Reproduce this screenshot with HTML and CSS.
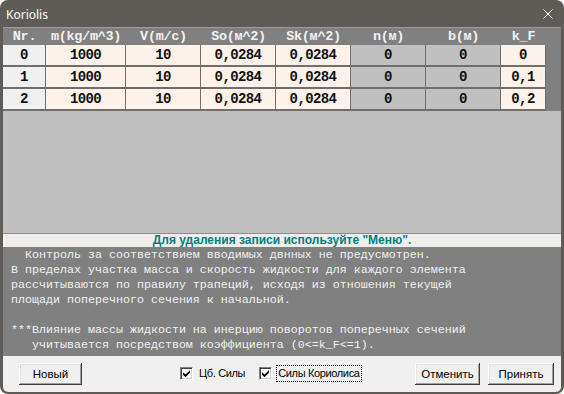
FILE: index.html
```html
<!DOCTYPE html>
<html lang="ru">
<head>
<meta charset="utf-8">
<title>Koriolis</title>
<link rel="stylesheet" href="styles.css">
</head>
<body>
<div class="window">
  <div class="titlebar">
    <span class="title">Koriolis</span>
    <svg class="close" width="10" height="10" viewBox="0 0 10 10"><path d="M0.5 0.5 L9.5 9.5 M9.5 0.5 L0.5 9.5" stroke="#ffffff" stroke-width="1" fill="none"/></svg>
  </div>
  <div class="client">
    <div class="grid-area">
      <div class="grid">
        <div class="hd">Nr.</div>
        <div class="hd">m(kg/m^3)</div>
        <div class="hd">V(m/c)</div>
        <div class="hd">So(м^2)</div>
        <div class="hd">Sk(м^2)</div>
        <div class="hd">n(м)</div>
        <div class="hd">b(м)</div>
        <div class="hd">k_F</div>
        <div class="hd"></div>

        <div class="c nr">0</div>
        <div class="c in">1000</div>
        <div class="c in">10</div>
        <div class="c in">0,0284</div>
        <div class="c in">0,0284</div>
        <div class="c ro">0</div>
        <div class="c ro">0</div>
        <div class="c in">0</div>
        <div class="c sp"></div>

        <div class="c nr">1</div>
        <div class="c in">1000</div>
        <div class="c in">10</div>
        <div class="c in">0,0284</div>
        <div class="c in">0,0284</div>
        <div class="c ro">0</div>
        <div class="c ro">0</div>
        <div class="c in">0,1</div>
        <div class="c sp"></div>

        <div class="c nr">2</div>
        <div class="c in">1000</div>
        <div class="c in">10</div>
        <div class="c in">0,0284</div>
        <div class="c in">0,0284</div>
        <div class="c ro">0</div>
        <div class="c ro">0</div>
        <div class="c in">0,2</div>
        <div class="c sp"></div>
      </div>
    </div>
    <div class="msg">Для удаления записи используйте "Меню".</div>
<pre class="notes">  Контроль за соответствием вводимых двнных не предусмотрен.
В пределах участка масса и скорость жидкости для каждого элемента
рассчитываются по правилу трапеций, исходя из отношения текущей
площади поперечного сечения к начальной.

***Влияние массы жидкости на инерцию поворотов поперечных сечений
   учитывается посредством коэффициента (0&lt;=k_F&lt;=1).</pre>
    <div class="bottom">
      <button class="btn btn-new">Новый</button>
      <label class="check check-first">
        <span class="box"><svg width="7" height="7" viewBox="0 0 7 7"><polygon points="0,2.2 2.5,4.6 7,0.2 7,2.8 2.5,7.2 0,4.8" fill="#000"/></svg></span>
        <span class="lbl">Цб. Силы</span>
      </label>
      <label class="check check-second">
        <span class="box"><svg width="7" height="7" viewBox="0 0 7 7"><polygon points="0,2.2 2.5,4.6 7,0.2 7,2.8 2.5,7.2 0,4.8" fill="#000"/></svg></span>
        <span class="lbl focus">Силы Кориолиса</span>
      </label>
      <button class="btn btn-cancel">Отменить</button>
      <button class="btn btn-ok">Принять</button>
    </div>
  </div>
</div>
</body>
</html>
```
FILE: styles.css
```css
html, body {
  margin: 0;
  padding: 0;
  background: #ffffff;
}

.window {
  width: 564px;
  height: 394px;
  box-sizing: border-box;
  background: #5f5b57;
  border-radius: 8px;
  display: flex;
  flex-direction: column;
  overflow: hidden;
}

.titlebar {
  height: 27px;
  flex: none;
  display: flex;
  align-items: center;
  justify-content: space-between;
  padding: 1px 11px 0 6px;
  box-sizing: border-box;
  color: #ffffff;
  font-family: "Noto Sans", "Liberation Sans", sans-serif;
  font-size: 12px;
}

.close {
  display: block;
}

.client {
  flex: 1;
  margin: 0 3px 2px 3px;
  background: #f0f0f0;
  display: flex;
  flex-direction: column;
  border-radius: 0 0 5px 5px;
  overflow: hidden;
}

.grid-area {
  height: 206px;
  flex: none;
  box-sizing: border-box;
  background: #c0c0c0;
  border-top: 1px solid #9c9c9c;
}

.grid {
  display: grid;
  grid-template-columns: 43px 80px 75px 75px 75px 75px 75px 45px 1fr;
  grid-template-rows: 17px 22px 22px 22px;
  font-family: "Liberation Mono", "Courier New", monospace;
  font-weight: bold;
  font-size: 14px;
  letter-spacing: -0.6px;
}

.hd {
  background: #808080;
  color: #f2f2f2;
  display: flex;
  align-items: center;
  justify-content: center;
  font-size: 13.5px;
  letter-spacing: -0.3px;
}

.c {
  display: flex;
  align-items: center;
  justify-content: center;
  box-sizing: border-box;
  border-right: 1px solid #6e6e6e;
  border-bottom: 2px solid #6e6e6e;
  color: #111111;
}

.nr {
  background: #f0f0f0;
}

.in {
  background: #fcf2e9;
}

.ro {
  background: #c0c0c0;
}

.sp {
  background: #808080;
  border-right: none;
  border-bottom-color: #808080;
}

.msg {
  height: 14px;
  flex: none;
  box-sizing: border-box;
  border-top: 1px solid #8c8c8c;
  background: #f0eeeb;
  color: #007f7f;
  font-family: "Liberation Sans", Arial, sans-serif;
  font-weight: bold;
  font-size: 12px;
  line-height: 13px;
  text-align: center;
}

.notes {
  height: 109px;
  flex: none;
  box-sizing: border-box;
  margin: 0;
  padding: 1px 0 0 8px;
  background: #808080;
  color: #f0f0f0;
  font-family: "Liberation Mono", "Courier New", monospace;
  font-size: 11.67px;
  line-height: 15px;
  white-space: pre;
  overflow: hidden;
}

.bottom {
  flex: 1;
  display: flex;
  align-items: flex-start;
  padding: 7px 7px 0 16px;
  font-family: "Liberation Sans", Arial, sans-serif;
  font-size: 11.5px;
  color: #000000;
}

.btn {
  height: 22px;
  box-sizing: border-box;
  padding: 0;
  border: none;
  background: #f0f0f0;
  font: inherit;
  color: #000000;
  box-shadow: inset -1px -1px #404040, inset 1px 1px #ffffff, inset -2px -2px #a0a0a0, inset 2px 2px #e3e3e3;
}

.btn-new {
  width: 63px;
}

.btn-cancel {
  width: 65px;
  margin-left: auto;
}

.btn-ok {
  width: 66px;
  margin-left: 8px;
}

.check {
  display: flex;
  align-items: center;
  height: 17px;
  margin-top: 2px;
  font-size: 11px;
  letter-spacing: -0.35px;
}

.check-first {
  margin-left: 98px;
}

.check-second {
  margin-left: 13px;
}

.box {
  width: 13px;
  height: 13px;
  box-sizing: border-box;
  background: #ffffff;
  border: 1px solid;
  border-color: #808080 #ffffff #ffffff #808080;
  box-shadow: inset 1px 1px #404040, inset -1px -1px #d4d0c8;
  display: flex;
  align-items: center;
  justify-content: center;
  margin-right: 5px;
}

.box svg {
  display: block;
}

.lbl {
  line-height: 15px;
  padding: 0 1px;
}

.focus {
  border: 1px dotted #000000;
  margin-left: -1px;
}
```
